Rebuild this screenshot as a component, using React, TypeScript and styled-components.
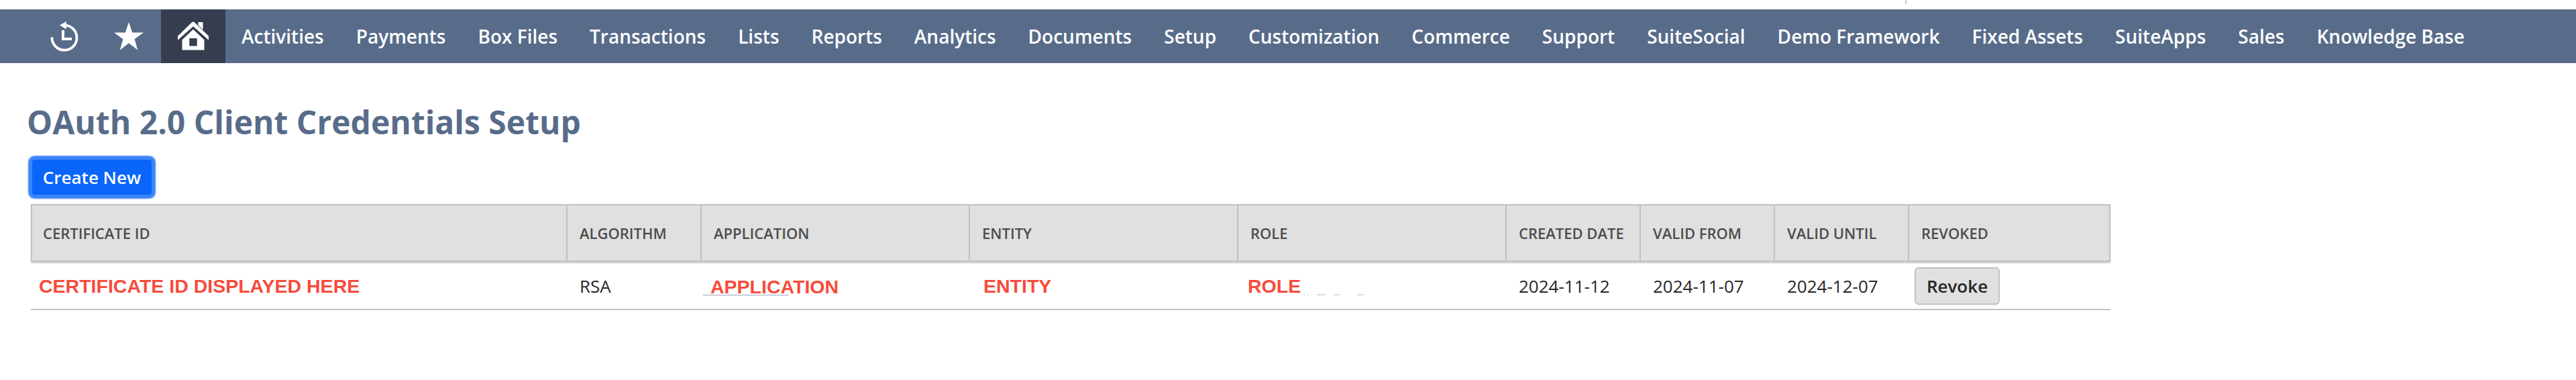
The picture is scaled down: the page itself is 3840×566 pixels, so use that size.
import React from 'react';
import styled, {createGlobalStyle} from 'styled-components';

const theme = {
    font: '"Open Sans", "Noto Sans", sans-serif',
    nav: '#586c8a',
    navActive: '#353d4f',
    blue: '#0a66fa',
    line: '#c1c1c1',
    head: '#e0e0e0',
    headText: '#4d4d4d',
    text: '#262626',
    red: '#f74b3b',
}

const menu = [
    'Activities', 'Payments', 'Box Files', 'Transactions', 'Lists', 'Reports', 'Analytics',
    'Documents', 'Setup', 'Customization', 'Commerce', 'Support', 'SuiteSocial',
    'Demo Framework', 'Fixed Assets', 'SuiteApps', 'Sales', 'Knowledge Base',
]

const columns = [
    'Certificate ID', 'Algorithm', 'Application', 'Entity', 'Role',
    'Created Date', 'Valid From', 'Valid Until', 'Revoked',
]

const HistoryIcon = () => (
    <Icon viewBox="0 0 96 80">
        <path d="M29.5 41.5A18.5 18.5 0 1 0 48 23.7" fill="none" stroke="#fff" strokeWidth="3.8"/>
        <path d="M41 23.4L50.8 18v11.4z"/>
        <path d="M44 31h4v11h11v4H44z"/>
    </Icon>
)

const StarIcon = () => (
    <Icon viewBox="0 0 96 80">
        <path d="M48 19l5.2 15.5h16.8l-13.4 9.8 4.6 16.2L48 50.3 34.8 60.5l4.6-16.2L26 34.5h16.8z"/>
    </Icon>
)

const HomeIcon = () => (
    <Icon viewBox="0 0 96 80">
        <path d="M55.5 19h7v11.5l-7-7z"/>
        <path d="M48 18.5q1.3 0 2.2.9L71 39.8v6L48 25.2 25 45.8v-6l20.8-20.4q.9-.9 2.2-.9z"/>
        <path fillRule="evenodd" d="M48 29.8l16.5 15.4v15.3h-33V45.2zM42.3 43v11.5h11.4V43z"/>
    </Icon>
)

const App = () => {
    return (
        <Page>
            <GlobalStyle/>
            <TopStrip>
                <Tick/>
            </TopStrip>
            <Nav>
                <IconLink><HistoryIcon/></IconLink>
                <IconLink><StarIcon/></IconLink>
                <IconLink $active><HomeIcon/></IconLink>
                <Menu>
                    {menu.map((item) => <MenuItem key={item}>{item}</MenuItem>)}
                </Menu>
            </Nav>
            <Content>
                <Title>OAuth 2.0 Client Credentials Setup</Title>
                <CreateButton>Create New</CreateButton>
                <Table>
                    <HeadRow>
                        {columns.map((column) => <HeadCell key={column}>{column}</HeadCell>)}
                    </HeadRow>
                    <Row>
                        <Cell $indent={12}><Note>CERTIFICATE ID DISPLAYED HERE</Note></Cell>
                        <Cell>RSA</Cell>
                        <Cell $indent={13}>
                            <Note $lowered>APPLICATION</Note>
                            <LinkLine/>
                        </Cell>
                        <Cell $indent={20}><Note>ENTITY</Note></Cell>
                        <Cell $indent={14}>
                            <Note>ROLE</Note>
                            <Remains viewBox="0 0 92 2">
                                <path d="M0 1h2M6 1h2M20 1h13M45 1h10M80 1h10"/>
                            </Remains>
                        </Cell>
                        <Cell>2024-11-12</Cell>
                        <Cell>2024-11-07</Cell>
                        <Cell>2024-12-07</Cell>
                        <Cell $indent={8}><RevokeButton>Revoke</RevokeButton></Cell>
                    </Row>
                </Table>
            </Content>
        </Page>
    );
};

export default App;

const GlobalStyle = createGlobalStyle`
    * {
        box-sizing: border-box;
    }

    body {
        margin: 0;
        background: #fff;
        font-family: ${theme.font};
    }
`;

const Page = styled.div`
    width: 3840px;
    height: 566px;
    background: #fff;
    overflow: hidden;
`;

const TopStrip = styled.div`
    height: 14px;
    padding-left: 2840px;
`;

const Tick = styled.div`
    width: 2px;
    height: 6px;
    background: #c8c8c8;
`;

const Nav = styled.nav`
    height: 80px;
    padding-left: 48px;
    display: flex;
    background: ${theme.nav};
`;

const IconLink = styled.a<{ $active?: boolean }>`
    width: 96px;
    height: 80px;
    background: ${({$active}) => $active ? theme.navActive : 'transparent'};
`;

const Icon = styled.svg`
    display: block;
    width: 96px;
    height: 80px;
    fill: #fff;
`;

const Menu = styled.div`
    display: flex;
    align-items: center;
    padding-left: 24px;
    gap: 48px;
`;

const MenuItem = styled.a`
    color: #fff;
    font-size: 28px;
    font-weight: 600;
    line-height: 80px;
    white-space: nowrap;
`;

const Content = styled.main`
    padding: 55px 0 0 46px;
`;

const Title = styled.h1`
    margin: 0 0 0 -6px;
    height: 66px;
    color: ${theme.nav};
    font-size: 48px;
    font-weight: 700;
    line-height: 65px;
`;

const CreateButton = styled.button`
    display: block;
    width: 178px;
    height: 52px;
    margin: 23px 0 14px 2px;
    padding: 0;
    border: none;
    border-radius: 4px;
    background: ${theme.blue};
    box-shadow: 0 0 2px 6px #3a83f8;
    color: #fff;
    font-family: inherit;
    font-size: 26px;
    font-weight: 600;
    line-height: 52px;
`;

const Table = styled.div`
    width: 3100px;
`;

const HeadRow = styled.div`
    display: grid;
    grid-template-columns: 798px 200px 400px 400px 400px 200px 200px 200px 300px;
    height: 86px;
    border: 2px solid ${theme.line};
    border-right: none;
    background: ${theme.head};
    box-shadow: 0 2px 2px rgba(0, 0, 0, 0.2);
`;

const HeadCell = styled.div`
    padding-left: 18px;
    border-right: 2px solid ${theme.line};
    color: ${theme.headText};
    font-size: 22px;
    font-weight: 600;
    line-height: 82px;
    text-transform: uppercase;

    &:first-child {
        padding-left: 16px;
    }
`;

const Row = styled.div`
    display: grid;
    grid-template-columns: 800px 200px 400px 400px 400px 200px 200px 200px 300px;
    height: 72px;
    border-bottom: 2px solid ${theme.line};
`;

const Cell = styled.div<{ $indent?: number }>`
    position: relative;
    display: flex;
    align-items: center;
    height: 72px;
    padding-left: ${({$indent}) => $indent ?? 18}px;
    color: ${theme.text};
    font-size: 26px;
    line-height: 72px;
`;

const Note = styled.span<{ $lowered?: boolean }>`
    padding-top: ${({$lowered}) => $lowered ? '2px' : '0'};
    color: ${theme.red};
    font-family: "Liberation Sans", Arial, sans-serif;
    font-size: 28.5px;
    font-weight: 700;
    white-space: nowrap;
`;

// underline left from the covered link
const LinkLine = styled.i`
    position: absolute;
    left: 2px;
    top: 49px;
    width: 128px;
    height: 1px;
    background: #9aa3b5;
`;

const Remains = styled.svg`
    position: absolute;
    left: 97px;
    top: 48px;
    width: 92px;
    height: 2px;
    stroke: #b4bac7;
`;

const RevokeButton = styled.button`
    width: 127px;
    height: 56px;
    padding: 0;
    border: 2px solid ${theme.line};
    border-radius: 6px;
    background: ${theme.head};
    color: ${theme.text};
    font-family: inherit;
    font-size: 26px;
    font-weight: 600;
    line-height: 52px;
`;
